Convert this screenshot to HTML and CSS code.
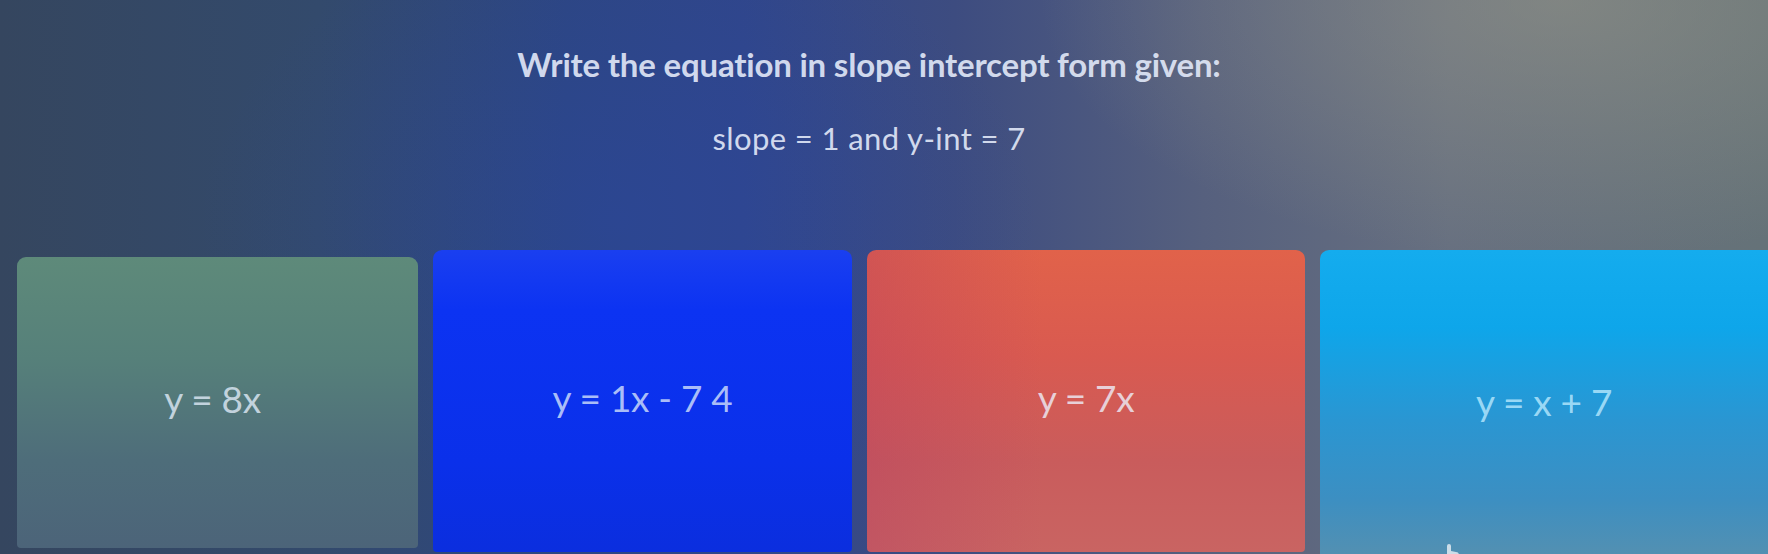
FILE: index.html
```html
<!DOCTYPE html>
<html lang="en">
<head>
<meta charset="utf-8">
<title>Quiz</title>
<link rel="stylesheet" href="styles.css">
</head>
<body>
<div class="screen">
  <header class="question">
    <h1 class="title">Write the equation in slope intercept form given:</h1>
    <p class="given">slope = 1 and y-int = 7</p>
  </header>
  <main class="answers">
    <div class="card card-green"><span class="ans">y = 8x</span></div>
    <div class="card card-blue"><span class="ans">y = 1x - 7 4</span></div>
    <div class="card card-red"><span class="ans">y = 7x</span></div>
    <div class="card card-cyan"><span class="ans">y = x + 7</span>
      <svg class="cursor" width="22" height="20" viewBox="0 0 22 20"><path d="M9 20 V6 a2 2 0 0 1 4 0 V11 l5 1 a3 3 0 0 1 3 3 V20 Z" fill="rgba(235,240,245,0.8)"/></svg>
    </div>
  </main>
</div>
</body>
</html>
```
FILE: styles.css
```css
html, body {
  margin: 0;
  padding: 0;
  width: 1768px;
  height: 554px;
  overflow: hidden;
}
body {
  font-family: "Lato", "Noto Sans", sans-serif;
  background:
    radial-gradient(ellipse 520px 260px at 1560px 0px, rgba(150,150,135,0.55), rgba(150,150,135,0) 100%),
    radial-gradient(ellipse 420px 300px at 620px 220px, rgba(40,70,170,0.35), rgba(40,70,170,0) 100%),
    linear-gradient(90deg, #35465f 0%, #334a6c 18%, #2d4682 32%, #30468a 42%, #3d4c80 54%, #56607e 68%, #677080 82%, #657278 100%);
}
.screen {
  display: flex;
  flex-direction: column;
  height: 554px;
}
.question {
  display: flex;
  flex-direction: column;
  align-items: center;
  padding: 44px 30px 0 0;
  color: rgba(225, 232, 248, 0.92);
}
.title {
  margin: 0;
  font-size: 33px;
  font-weight: 700;
  line-height: 40px;
  letter-spacing: -0.2px;
}
.given {
  margin: 36px 0 0 0;
  font-size: 31px;
  font-weight: 400;
  line-height: 36px;
  letter-spacing: 0.4px;
}
.answers {
  display: grid;
  grid-template-columns: 401px 419px 438px 1fr;
  column-gap: 15px;
  padding: 0 0 0 17px;
  margin-top: 94px;
  flex: 1;
}
.card {
  position: relative;
  border-radius: 9px 9px 4px 4px;
  display: flex;
  align-items: center;
  justify-content: center;
  padding-bottom: 8px;
  margin-bottom: 6px;
}
.ans {
  font-size: 37px;
  font-weight: 400;
  letter-spacing: -0.3px;
  color: rgba(215, 228, 240, 0.85);
}
.card-green {
  margin-top: 7px;
  background: linear-gradient(180deg, #5e8a7a 0%, #56807a 35%, #4e6d7a 70%, #4c6479 100%);
}
.card-green .ans { margin-right: 10px; }
.card-blue {
  background: linear-gradient(180deg, #1a3ff0 0%, #0c33f2 20%, #0a30ea 70%, #0b2ede 100%);
  margin-bottom: 2px;
}
.card-blue .ans { color: rgba(200, 215, 250, 0.85); }
.card-red {
  background:
    linear-gradient(90deg, rgba(180,60,100,0.35) 0%, rgba(180,60,100,0) 40%),
    linear-gradient(180deg, #e1624a 0%, #d95a50 35%, #c95c5c 70%, #c96462 100%);
  margin-bottom: 2px;
}
.card-red .ans { color: rgba(235, 225, 235, 0.88); }
.card-cyan {
  margin-bottom: -6px;
  border-radius: 9px 0 0 0;
  background: linear-gradient(180deg, #14acee 0%, #0ea6ea 25%, #2a96d2 55%, #3c8fc2 80%, #5590b0 100%);
}
.card-cyan .ans { color: rgba(170, 225, 250, 0.9); }
.cursor {
  position: absolute;
  left: 118px;
  bottom: 0;
}
```
